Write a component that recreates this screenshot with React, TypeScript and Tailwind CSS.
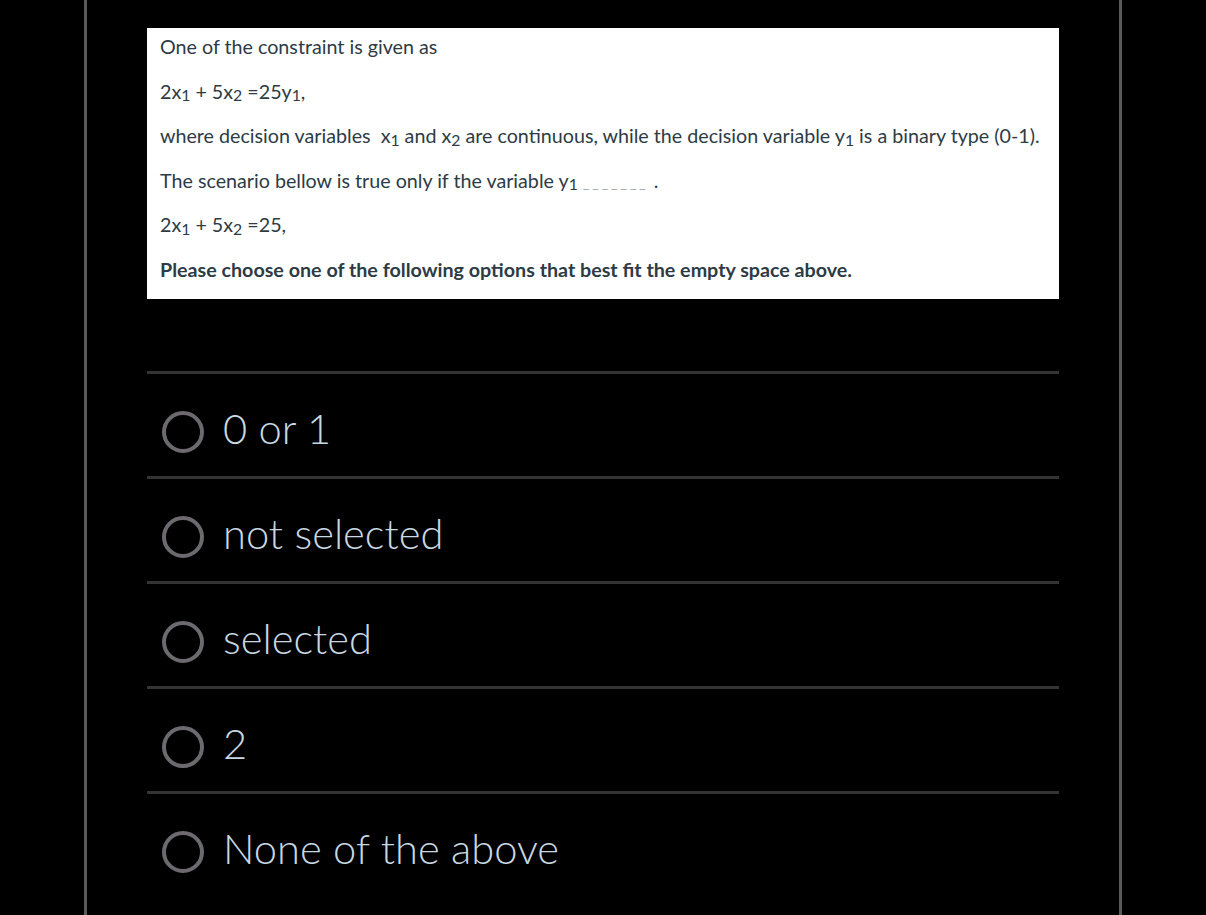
import React from "react";

const Sub = ({ children }: { children: React.ReactNode }) => (
  <sub className="text-[0.8em] relative top-[0.15em] leading-none align-baseline">{children}</sub>
);

const Radio = ({ label }: { label: string }) => (
  <div className="border-t-[3px] border-[#333333] h-[105px] pt-[37px] pl-[15px] flex items-start">
    <div className="w-[42px] h-[42px] rounded-full border-[4px] border-[#6c6a6f] shrink-0" />
    <span className="ml-[19px] text-[41.7px] leading-[42px] font-light text-[#c8d8e2] relative top-[-4px]">{label}</span>
  </div>
);

export default function App() {
  return (
    <div className="w-[1206px] h-[915px] bg-black overflow-hidden" style={{ fontFamily: "Lato, 'Open Sans', sans-serif" }}>
      <div className="ml-[84px] w-[1038px] h-[915px] border-x-[3px] border-[#5a5a5a] pl-[60px] pt-[28px]">
        <div className="w-[912px] h-[271px] bg-white pl-[13px] pt-[6px] text-[19.7px] leading-[26px] text-[#2d3b45] flex flex-col gap-[18.6px]">
          <p className="h-[26px] whitespace-nowrap">One of the constraint is given as</p>
          <p className="h-[26px] whitespace-nowrap">
            2x<Sub>1</Sub> + 5x<Sub>2</Sub> =25y<Sub>1</Sub>,
          </p>
          <p className="h-[26px] whitespace-nowrap">
            where decision variables&nbsp; x<Sub>1</Sub> and x<Sub>2</Sub> are continuous, while the decision variable y<Sub>1</Sub> is a binary type (0-1).
          </p>
          <p className="h-[26px] whitespace-nowrap">
            The scenario bellow is true only if the variable y<Sub>1</Sub>{" "}
            <span className="text-[#9aa1a6] text-[14px] tracking-[3px]">_______</span> .
          </p>
          <p className="h-[26px] whitespace-nowrap">
            2x<Sub>1</Sub> + 5x<Sub>2</Sub> =25,
          </p>
          <p className="h-[26px] whitespace-nowrap font-bold">Please choose one of the following options that best fit the empty space above.</p>
        </div>
        <div className="w-[912px] mt-[72px]">
          <Radio label="0 or 1" />
          <Radio label="not selected" />
          <Radio label="selected" />
          <Radio label="2" />
          <Radio label="None of the above" />
        </div>
      </div>
    </div>
  );
}
